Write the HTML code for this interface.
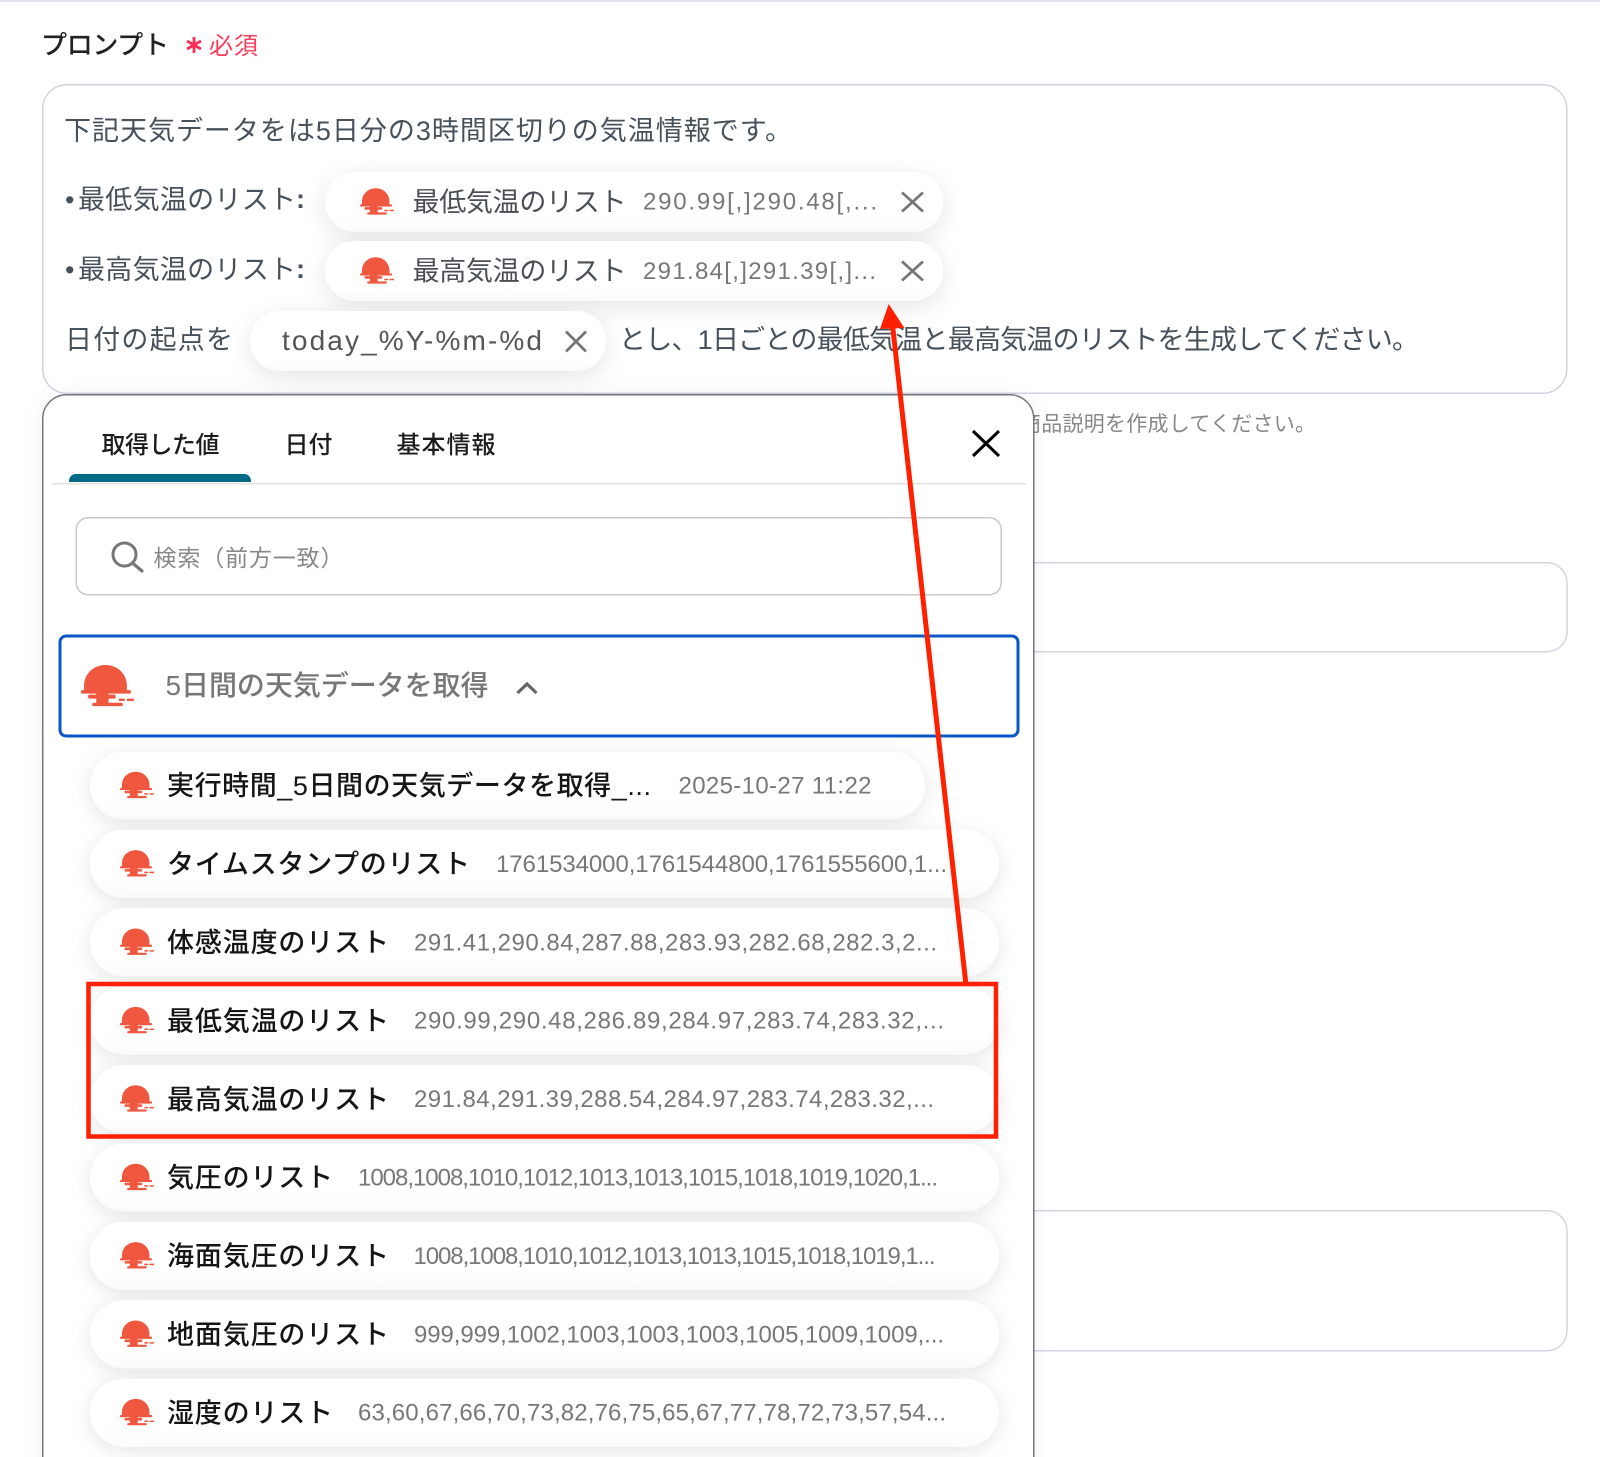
<!DOCTYPE html>
<html lang="ja"><head><meta charset="utf-8"><title>プロンプト</title>
<style>
html,body{margin:0;padding:0;background:#fff}
svg{display:block}
text{font-family:"Liberation Sans","Noto Sans CJK JP",sans-serif;white-space:pre}
.m{font-size:27px;fill:#47515b}
.p{font-size:27px;fill:#4a4f55}
.pv{font-size:24px;fill:#777}
.t{font-size:27px;font-weight:500;fill:#151515}
.v{font-size:24px;fill:#777}
.tab{font-size:24px;font-weight:500;fill:#1c1c1c}
</style></head><body>
<svg xmlns="http://www.w3.org/2000/svg" width="1600" height="1457" viewBox="0 0 1600 1457">
<defs>
<symbol id="sun" viewBox="30 42 156 122">
<path fill="#ef573e" d="M39 118V103C39 68 67 42 102 42C137 42 165 68 165 103V118Z"/>
<rect fill="#ef573e" x="30" y="116" width="147" height="10" rx="4"/>
<rect fill="#ef573e" x="51" y="129" width="81" height="12" rx="4"/>
<rect fill="#ef573e" x="75" y="124" width="36" height="32"/>
<rect fill="#ef573e" x="141" y="141" width="18" height="7" rx="2"/>
<rect fill="#ef573e" x="165" y="141" width="21" height="7" rx="2"/>
<rect fill="#ef573e" x="63" y="153" width="90" height="10" rx="4"/>
</symbol>
<filter id="ps" x="-15%" y="-80%" width="130%" height="260%"><feDropShadow dx="0" dy="6" stdDeviation="12" flood-color="#000" flood-opacity=".1"/></filter>
<filter id="is" x="-6%" y="-60%" width="112%" height="220%"><feDropShadow dx="0" dy="4" stdDeviation="10" flood-color="#000" flood-opacity=".1"/></filter>
<filter id="pop" x="-5%" y="-5%" width="110%" height="110%"><feDropShadow dx="0" dy="2" stdDeviation="10" flood-color="#000" flood-opacity=".06"/></filter>
<linearGradient id="ig" x1="0" y1="0" x2="0" y2="1"><stop offset="0" stop-color="#fff"/><stop offset=".7" stop-color="#fff"/><stop offset="1" stop-color="#fbfbfb"/></linearGradient>
<clipPath id="pc"><rect x="43" y="395" width="990" height="1100" rx="24"/></clipPath>
</defs>

<rect width="1600" height="1457" fill="#fff"/>
<rect width="1600" height="2" fill="#e2e2f0"/>

<text x="41" y="54" font-size="26" font-weight="500" fill="#222" textLength="128">プロンプト</text>
<g stroke="#ff2d55" stroke-width="2.8"><line x1="194" y1="37" x2="194" y2="53"/><line x1="187" y1="41" x2="201" y2="49"/><line x1="201" y1="41" x2="187" y2="49"/></g>
<text x="209" y="54" font-size="24" fill="#ff3b5c" textLength="49">必須</text>

<rect x="42.75" y="84.75" width="1524" height="308.5" rx="24" fill="#fff" stroke="#cfd3df" stroke-width="1.5"/>

<text class="m" x="64" y="140" textLength="728">下記天気データをは5日分の3時間区切りの気温情報です。</text>

<text class="m" x="65" y="209">•</text>
<text class="m" x="78" y="209" textLength="218">最低気温のリスト</text>
<text class="m" x="296" y="208" font-weight="700">:</text>
<text class="m" x="65" y="279">•</text>
<text class="m" x="78" y="279" textLength="218">最高気温のリスト</text>
<text class="m" x="296" y="278" font-weight="700">:</text>
<text class="m" x="65" y="349" textLength="168">日付の起点を</text>
<text class="m" x="619" y="349" textLength="800">とし、1日ごとの最低気温と最高気温のリストを生成してください。</text>

<rect x="325" y="172" width="618" height="60" rx="30" fill="url(#ig)" filter="url(#ps)"/>
<rect x="325" y="241" width="618" height="60" rx="30" fill="url(#ig)" filter="url(#ps)"/>
<rect x="250" y="311" width="356" height="60" rx="30" fill="url(#ig)" filter="url(#ps)"/>

<use href="#sun" x="360" y="188" width="34" height="27"/>
<text class="p" x="412.5" y="211.5" textLength="214">最低気温のリスト</text>
<text class="pv" x="643" y="209.5" textLength="234">290.99[,]290.48[,...</text>
<path d="M902 192.5L923 211.5M923 192.5L902 211.5" stroke="#777" stroke-width="2.8" fill="none"/>

<use href="#sun" x="360" y="257" width="34" height="27"/>
<text class="p" x="412.5" y="280.5" textLength="214">最高気温のリスト</text>
<text class="pv" x="643" y="279" textLength="233">291.84[,]291.39[,]...</text>
<path d="M902 261.5L923 280.5M923 261.5L902 280.5" stroke="#777" stroke-width="2.8" fill="none"/>

<text x="282" y="350" font-size="28" fill="#555" textLength="260">today_%Y-%m-%d</text>
<path d="M566 331.5L586 351.5M586 331.5L566 351.5" stroke="#777" stroke-width="2.8" fill="none"/>

<text x="1020" y="431" font-size="21" fill="#888" textLength="296">商品説明を作成してください。</text>

<rect x="800" y="562.75" width="767" height="89" rx="20" fill="#fff" stroke="#d3d6e2" stroke-width="1.5"/>
<rect x="800" y="1210.75" width="767" height="140" rx="20" fill="#fff" stroke="#d3d6e2" stroke-width="1.5"/>

<rect x="42.75" y="394.75" width="991" height="1100" rx="24" fill="#fff" stroke="#777" stroke-width="1.5" filter="url(#pop)"/>

<text class="tab" x="101.5" y="453" textLength="118">取得した値</text>
<text class="tab" x="284.5" y="453" textLength="48">日付</text>
<text class="tab" x="396.5" y="453" textLength="99">基本情報</text>
<path d="M69 482V481C69 477 72 474 76 474H244C248 474 251 477 251 481V482Z" fill="#056a85"/>
<rect x="52" y="483" width="974" height="1.5" fill="#e2e2e2"/>
<path d="M973 431L999 456M999 431L973 456" stroke="#000" stroke-width="3" fill="none"/>

<rect x="76.25" y="517.75" width="925" height="77" rx="12" fill="#fff" stroke="#c8c8c8" stroke-width="1.5"/>
<circle cx="124.5" cy="554.5" r="11.5" fill="none" stroke="#777" stroke-width="3"/>
<path d="M132.5 563L142 571" stroke="#777" stroke-width="3.2" fill="none" stroke-linecap="round"/>
<text x="153.5" y="566" font-size="23" fill="#888" textLength="190">検索（前方一致）</text>

<rect x="60" y="636" width="958" height="100" rx="6" fill="#fff" stroke="#0b57c8" stroke-width="3"/>
<use href="#sun" x="81" y="665" width="53" height="41.5"/>
<text x="165.5" y="695" font-size="28" font-weight="500" fill="#777" textLength="323">5日間の天気データを取得</text>
<path d="M517.5 693L527 684L536.5 693" stroke="#666" stroke-width="3.2" fill="none"/>

<g clip-path="url(#pc)">
<rect x="90" y="751.5" width="835" height="68" rx="34" fill="url(#ig)" filter="url(#is)"/>
<rect x="90" y="829.9" width="909" height="68" rx="34" fill="url(#ig)" filter="url(#is)"/>
<rect x="90" y="908.3" width="909" height="68" rx="34" fill="url(#ig)" filter="url(#is)"/>
<rect x="90" y="986.7" width="909" height="68" rx="34" fill="url(#ig)" filter="url(#is)"/>
<rect x="90" y="1065.1" width="909" height="68" rx="34" fill="url(#ig)" filter="url(#is)"/>
<rect x="90" y="1143.5" width="909" height="68" rx="34" fill="url(#ig)" filter="url(#is)"/>
<rect x="90" y="1221.9" width="909" height="68" rx="34" fill="url(#ig)" filter="url(#is)"/>
<rect x="90" y="1300.3" width="909" height="68" rx="34" fill="url(#ig)" filter="url(#is)"/>
<rect x="90" y="1378.7" width="909" height="68" rx="34" fill="url(#ig)" filter="url(#is)"/>
</g>

<use href="#sun" x="120" y="771.5" width="34" height="27"/>
<text class="t" x="167" y="795.2" textLength="484">実行時間_5日間の天気データを取得_...</text>
<text class="v" x="678.5" y="793.5" textLength="193">2025-10-27 11:22</text>

<use href="#sun" x="120" y="849.9" width="34" height="27"/>
<text class="t" x="167" y="873.6" textLength="303">タイムスタンプのリスト</text>
<text class="v" x="496" y="871.9" textLength="451">1761534000,1761544800,1761555600,1...</text>

<use href="#sun" x="120" y="928.3" width="34" height="27"/>
<text class="t" x="167" y="952" textLength="222">体感温度のリスト</text>
<text class="v" x="414" y="950.3" textLength="523">291.41,290.84,287.88,283.93,282.68,282.3,2...</text>

<use href="#sun" x="120" y="1006.7" width="34" height="27"/>
<text class="t" x="167" y="1030.4" textLength="222">最低気温のリスト</text>
<text class="v" x="414" y="1028.7" textLength="530">290.99,290.48,286.89,284.97,283.74,283.32,...</text>

<use href="#sun" x="120" y="1085.1" width="34" height="27"/>
<text class="t" x="167" y="1108.8" textLength="222">最高気温のリスト</text>
<text class="v" x="414" y="1107.1" textLength="520">291.84,291.39,288.54,284.97,283.74,283.32,...</text>

<use href="#sun" x="120" y="1163.5" width="34" height="27"/>
<text class="t" x="167" y="1187.2" textLength="166">気圧のリスト</text>
<text class="v" x="358" y="1185.5" textLength="580">1008,1008,1010,1012,1013,1013,1015,1018,1019,1020,1...</text>

<use href="#sun" x="120" y="1241.9" width="34" height="27"/>
<text class="t" x="167" y="1265.6" textLength="222">海面気圧のリスト</text>
<text class="v" x="413.5" y="1263.9" textLength="522">1008,1008,1010,1012,1013,1013,1015,1018,1019,1...</text>

<use href="#sun" x="120" y="1320.3" width="34" height="27"/>
<text class="t" x="167" y="1344" textLength="222">地面気圧のリスト</text>
<text class="v" x="414" y="1342.3" textLength="530">999,999,1002,1003,1003,1003,1005,1009,1009,...</text>

<use href="#sun" x="120" y="1398.7" width="34" height="27"/>
<text class="t" x="167" y="1422.4" textLength="166">湿度のリスト</text>
<text class="v" x="358" y="1420.7" textLength="588">63,60,67,66,70,73,82,76,75,65,67,77,78,72,73,57,54...</text>

<rect x="88.5" y="984" width="907.5" height="152.5" fill="none" stroke="#ff2000" stroke-width="4.5"/>
<line x1="892.5" y1="325" x2="966" y2="985" stroke="#ff2000" stroke-width="5"/>
<path d="M888.7 304L904.5 328L880 329Z" fill="#ff2000"/>
</svg>
</body></html>
